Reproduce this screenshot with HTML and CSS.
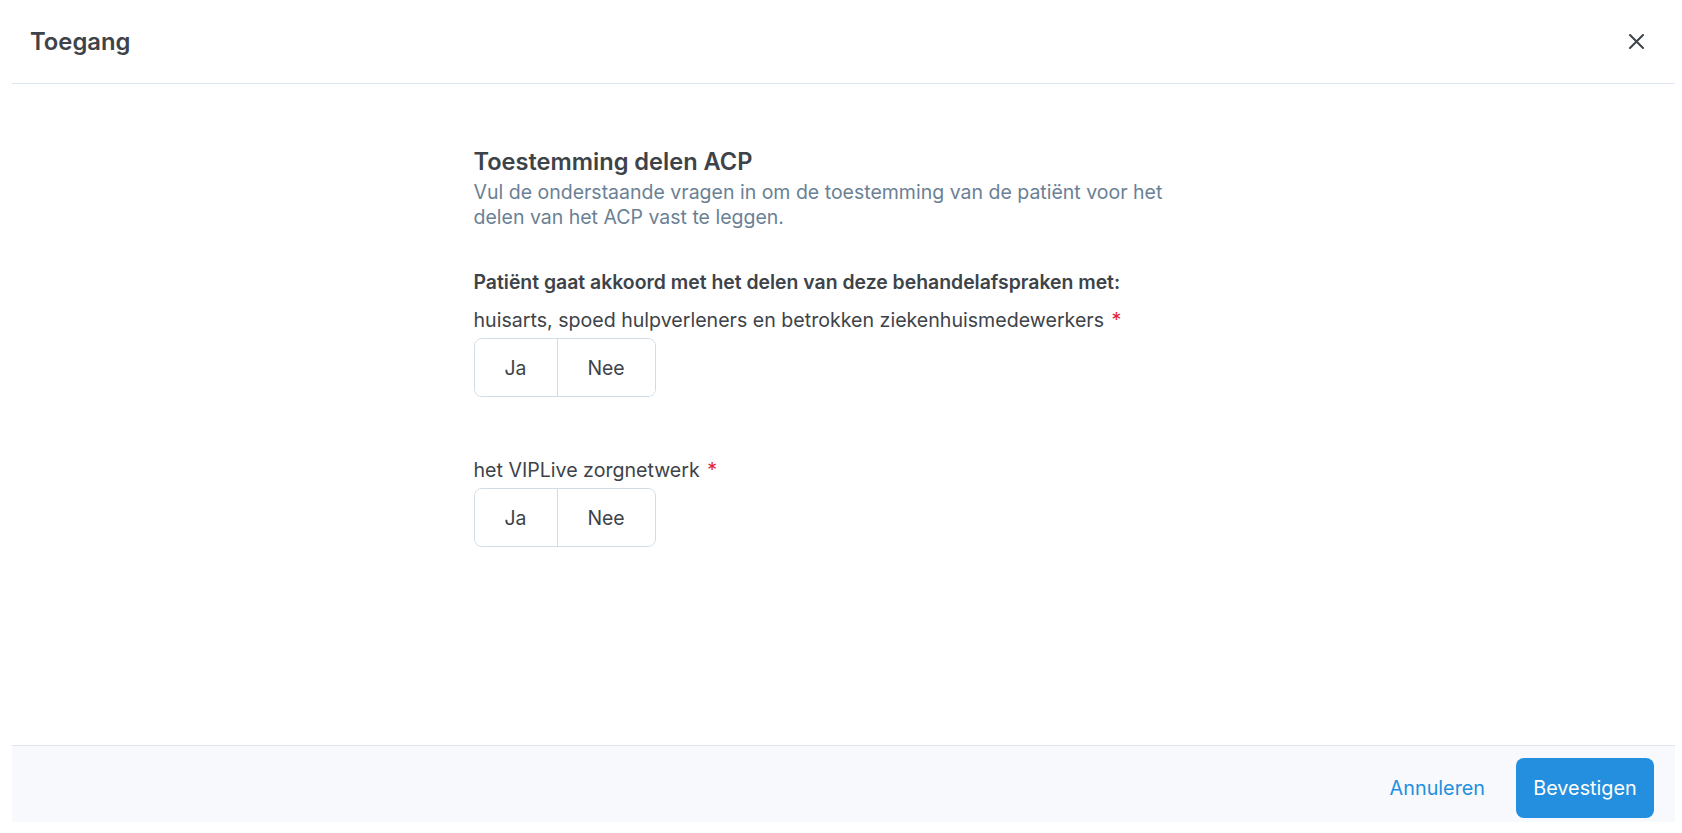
FILE: index.html
```html
<!DOCTYPE html>
<html lang="nl">
<head>
<meta charset="utf-8">
<title>Toegang</title>
<link rel="stylesheet" href="styles.css">
</head>
<body>
<div class="modal">
  <header class="modal-header">
    <h1 class="modal-title">Toegang</h1>
    <button class="close-btn" aria-label="Sluiten">
      <svg width="15" height="15" viewBox="0 0 15 15"><path d="M1 1L14 14M14 1L1 14" stroke="#3d4349" stroke-width="2" stroke-linecap="round"/></svg>
    </button>
  </header>
  <main class="modal-body">
    <div class="content">
      <h2 class="section-title">Toestemming delen ACP</h2>
      <p class="section-sub">Vul de onderstaande vragen in om de toestemming van de patiënt voor het delen van het ACP vast te leggen.</p>
      <p class="lead">Patiënt gaat akkoord met het delen van deze behandelafspraken met:</p>
      <div class="question">
        <div class="q-label">huisarts, spoed hulpverleners en betrokken ziekenhuismedewerkers <span class="req">*</span></div>
        <div class="seg">
          <button class="seg-btn seg-ja">Ja</button>
          <button class="seg-btn seg-nee">Nee</button>
        </div>
      </div>
      <div class="question q2">
        <div class="q-label">het VIPLive zorgnetwerk <span class="req">*</span></div>
        <div class="seg">
          <button class="seg-btn seg-ja">Ja</button>
          <button class="seg-btn seg-nee">Nee</button>
        </div>
      </div>
    </div>
  </main>
  <footer class="modal-footer">
    <button class="btn-link">Annuleren</button>
    <button class="btn-primary">Bevestigen</button>
  </footer>
</div>
</body>
</html>
```

FILE: styles.css
```css
* { box-sizing: border-box; }
html, body { margin: 0; padding: 0; background: #ffffff; }
body {
  font-family: Inter, "Noto Sans", "Liberation Sans", sans-serif;
  color: #3d4349;
  width: 1682px;
  height: 833px;
  overflow: hidden;
}
button { font-family: inherit; cursor: pointer; }

.modal {
  margin-left: 12px;
  width: 1663px;
  height: 822px;
  display: flex;
  flex-direction: column;
  background: #ffffff;
}

.modal-header {
  height: 84px;
  flex: none;
  display: flex;
  align-items: center;
  justify-content: space-between;
  padding: 0 31px 0 18px;
  border-bottom: 1px solid #dde5ee;
}
.modal-title {
  margin: 0;
  font-size: 23.8px;
  font-weight: 600;
  line-height: 28px;
  color: #3d4349;
}
.close-btn {
  border: 0;
  background: transparent;
  padding: 0;
  width: 15px;
  height: 15px;
  display: flex;
}

.modal-body {
  flex: 1;
  display: flex;
  justify-content: center;
  padding-top: 64px;
}
.content {
  width: 740px;
  display: flex;
  flex-direction: column;
}
.section-title {
  margin: 0;
  font-size: 23.6px;
  font-weight: 600;
  line-height: 28px;
  color: #3d4349;
}
.section-sub {
  margin: 4px 0 0;
  font-size: 19.5px;
  line-height: 25px;
  color: #6a8195;
  width: 730px;
}
.lead {
  margin: 40px 0 0;
  font-size: 19.4px;
  font-weight: 600;
  line-height: 25px;
  color: #3d4349;
}
.question { margin-top: 13px; display: flex; flex-direction: column; align-items: flex-start; }
.question.q2 { margin-top: 61px; }
.q-label {
  font-size: 19.6px;
  line-height: 25px;
  color: #3d4349;
}
.req { color: #e0243a; margin-left: 2px; }
.seg {
  margin-top: 5px;
  display: flex;
  height: 59px;
  border: 1px solid #d0dce6;
  border-radius: 8px;
  overflow: hidden;
  background: #fff;
}
.seg-btn {
  border: 0;
  background: #fff;
  font-size: 19.4px;
  color: #3d4349;
  padding: 0;
  height: 100%;
}
.seg-ja { width: 83px; border-right: 1px solid #d0dce6; }
.seg-nee { width: 97px; }

.modal-footer {
  height: 77px;
  flex: none;
  border-top: 1px solid #dde5ee;
  background: #f7f9fc;
  display: flex;
  justify-content: flex-end;
  align-items: flex-start;
  padding: 12px 21px 0 0;
  gap: 31px;
}
.btn-link {
  border: 0;
  background: transparent;
  color: #238fde;
  font-size: 19.8px;
  padding: 0;
  height: 60px;
}
.btn-primary {
  border: 0;
  background: #238fde;
  color: #fff;
  font-size: 19.8px;
  width: 138px;
  height: 60px;
  border-radius: 8px;
  padding: 0;
}
```
